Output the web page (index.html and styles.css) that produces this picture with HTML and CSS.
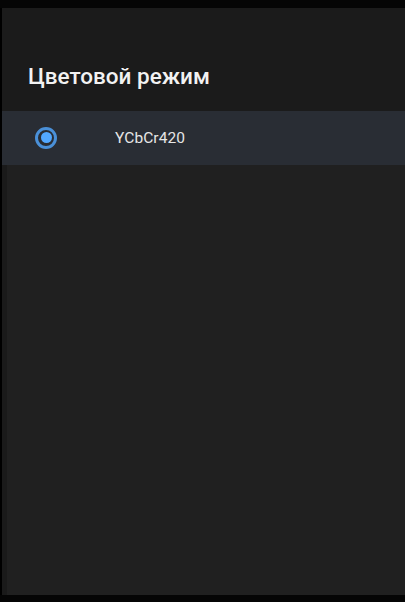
FILE: index.html
```html
<!DOCTYPE html>
<html lang="ru">
<head>
<meta charset="utf-8">
<link rel="stylesheet" href="styles.css">
</head>
<body>
<div class="screen">
  <div class="topbar"></div>
  <div class="panel">
    <header class="header">
      <h1 class="title">Цветовой режим</h1>
    </header>
    <div class="list">
      <div class="row selected">
        <span class="radio"><span class="dot"></span></span>
        <span class="label">YCbCr420</span>
      </div>
    </div>
  </div>
  <div class="bottombar"></div>
</div>
</body>
</html>
```
FILE: styles.css
```css
html, body {
  margin: 0;
  padding: 0;
  background: #000;
}
.screen {
  width: 405px;
  height: 602px;
  display: flex;
  flex-direction: column;
  background: #000;
  font-family: Roboto, "Noto Sans", sans-serif;
}
.topbar {
  height: 8px;
  flex: none;
  background: #050505;
}
.panel {
  flex: 1;
  display: flex;
  flex-direction: column;
  margin-left: 2px;
  background: #202020;
  border-left: 5px solid #1a1a1a;
}
.header {
  height: 103px;
  flex: none;
  background: #1b1b1b;
  display: flex;
  align-items: flex-end;
  box-sizing: border-box;
  padding-bottom: 22px;
  margin-left: -5px;
  padding-left: 26px;
}
.title {
  margin: 0;
  font-size: 22.5px;
  font-weight: 500;
  color: #f2f2f2;
  line-height: 26px;
  letter-spacing: 0;
}
.list {
  display: flex;
  flex-direction: column;
  margin-left: -5px;
}
.row {
  height: 54px;
  display: flex;
  align-items: center;
  padding-left: 33px;
  background: #292d34;
}
.radio {
  width: 22px;
  height: 22px;
  border: 3px solid #4a90d8;
  border-radius: 50%;
  display: flex;
  align-items: center;
  justify-content: center;
  box-sizing: border-box;
  margin-top: -1px;
}
.dot {
  width: 11px;
  height: 11px;
  border-radius: 50%;
  background: #52a8ff;
}
.label {
  margin-left: 58px;
  font-size: 15.5px;
  color: #e6e6e6;
  letter-spacing: 0.1px;
}
.bottombar {
  height: 7px;
  flex: none;
  background: #050505;
}
```
